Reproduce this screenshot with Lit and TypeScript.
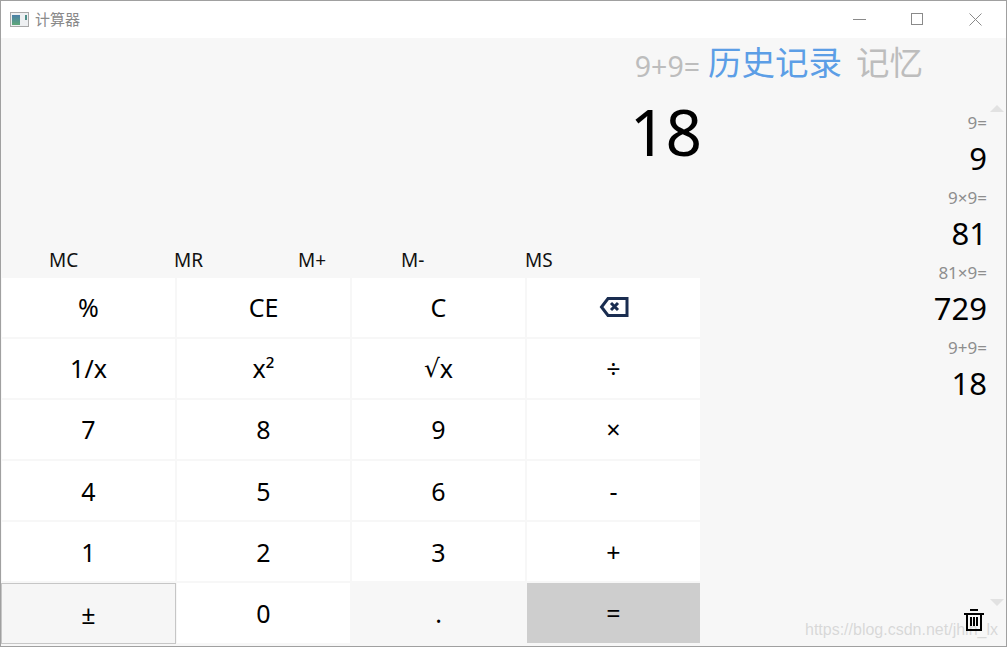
import { LitElement, html, css } from "lit";
import { customElement } from "lit/decorators.js";

const KEYS = ["%","CE","C","<","1/x","x²","√x","÷","7","8","9","×","4","5","6","-","1","2","3","+","±","0",".","="];
const HISTORY = [["9=","9"],["9×9=","81"],["81×9=","729"],["9+9=","18"]];
const MEM = [["MC",125],["MR",124],["M+",103],["M-",124],["MS",100]];

@customElement("app-root")
export class AppRoot extends LitElement {
  static styles = css`
    :host { display: block; width: 1007px; height: 647px; font-family: "Noto Sans", "Noto Sans CJK SC", sans-serif; }
    .win { position: relative; box-sizing: border-box; width: 1007px; height: 647px; border: 1px solid #a0a0a0; background: #f7f7f7; display: flex; flex-direction: column; overflow: hidden; }
    .title { height: 37px; flex: none; background: #fff; display: flex; align-items: center; padding: 0 2px 0 9px; color: #8a8a8a; font-size: 15px; font-family: "Noto Sans CJK SC", sans-serif; }
    .title .app { margin-right: 6px; display: block; }
    .title .name { flex: 1; padding-bottom: 2px; }
    .ctl { width: 58px; height: 37px; display: flex; align-items: center; justify-content: center; }
    .main { flex: 1; display: flex; min-height: 0; }
    .left { width: 699px; flex: none; padding-left: 1px; box-sizing: border-box; display: flex; flex-direction: column; }
    .expr { height: 58px; box-sizing: border-box; text-align: right; font-size: 28.500px; line-height: 56px; color: #bdbdbd; }
    .result { height: 142px; text-align: right; font-size: 64px; line-height: 72px; color: #000; letter-spacing: -1px; margin-right: -1px; }
    .mem { height: 39.500px; display: flex; padding-left: 47px; font-size: 19px; line-height: 45px; color: #111; }
    .grid { display: grid; grid-template-columns: repeat(4, 173px); grid-auto-rows: 59.200px; gap: 2px; }
    .key { background: #fff; display: flex; align-items: center; justify-content: center; font-size: 25px; color: #000; box-sizing: border-box; }
    .key .root { font-family: "DejaVu Sans", sans-serif; font-size: 25px; }
    .key.pm { background: #f6f6f6; border: 1px solid #c6c6c6; margin: 0 -1px -1px; }
    .key.dot { background: #f7f7f7; }
    .key.eq { background: #cecece; }
    .right { flex: 1; position: relative; padding-left: 8px; display: flex; flex-direction: column; }
    .tabs { height: 51px; display: flex; gap: 14px; font-family: "Noto Sans CJK SC", sans-serif; font-size: 33.500px; line-height: 46px; color: #bdbdbd; white-space: nowrap; }
    .tabs .on { color: #5c9ee6; }
    .hist { width: 279px; text-align: right; padding-top: 25px; }
    .item { height: 75px; }
    .q { font-size: 17px; line-height: 18px; color: #8e8e8e; }
    .a { font-size: 31px; line-height: 52px; color: #000; }
    .tri { position: absolute; right: 2px; width: 0; height: 0; border-left: 7px solid transparent; border-right: 7px solid transparent; }
    .tri.up { top: 67px; border-bottom: 7px solid #e2e2e2; }
    .tri.down { bottom: 40px; border-top: 7px solid #e2e2e2; }
    .trash { position: absolute; right: 22px; bottom: 15px; display: block; }
    .mark { position: absolute; right: 8px; bottom: 7px; font-family: "Liberation Sans", sans-serif; font-size: 16px; color: rgba(190,190,190,.55); white-space: nowrap; }
  `;

  private backspace() {
    return html`<svg width="30" height="22" viewBox="0 0 30 22" fill="none" stroke="#1a2d50" stroke-width="3">
      <path d="M28 2.500H9L2.500 11 9 19.500h19z" />
      <path d="M12 7l7 7M19 7l-7 7" />
    </svg>`;
  }

  private label(k: string) {
    if (k === "<") return this.backspace();
    if (k === "√x") return html`<span class="root">√</span>x`;
    return k;
  }

  render() {
    return html`<div class="win">
      <div class="title">
        <svg class="app" width="19" height="15" viewBox="0 0 19 15">
          <defs><linearGradient id="g" x1="0" y1="0" x2="0" y2="1"><stop offset="0" stop-color="#4a7fa8"/><stop offset="1" stop-color="#5fa878"/></linearGradient></defs>
          <rect x=".5" y=".5" width="18" height="14" fill="#eef0f2" stroke="#a9a9a9"/>
          <rect x="2" y="3" width="8" height="10" fill="url(#g)"/>
          <rect x="15" y="3" width="2" height="5" fill="#4f8f8a"/>
        </svg>
        <span class="name">计算器</span>
        <div class="ctl"><svg width="13" height="13"><path d="M0 6.500h13" stroke="#8a8a8a"/></svg></div>
        <div class="ctl"><svg width="13" height="13"><rect x=".5" y=".5" width="11" height="11" fill="none" stroke="#8a8a8a"/></svg></div>
        <div class="ctl"><svg width="13" height="13"><path d="M.5.500l12 12M12.500.500l-12 12" stroke="#8a8a8a" fill="none"/></svg></div>
      </div>
      <div class="main">
        <div class="left">
          <div class="expr">9+9=</div>
          <div class="result">18</div>
          <div class="mem">${MEM.map(([m, w]) => html`<span style="width:${w}px">${m}</span>`)}</div>
          <div class="grid">
            ${KEYS.map((k) => {
              const cls = k === "±" ? "pm" : k === "." ? "dot" : k === "=" ? "eq" : "";
              return html`<div class="key ${cls}">${this.label(k)}</div>`;
            })}
          </div>
        </div>
        <div class="right">
          <div class="tabs"><span class="on">历史记录</span><span>记忆</span></div>
          <div class="hist">
            ${HISTORY.map(([q, a]) => html`<div class="item"><div class="q">${q}</div><div class="a">${a}</div></div>`)}
          </div>
          <div class="tri up"></div>
          <div class="tri down"></div>
          <div class="mark">https://blog.csdn.net/jhlh_lx</div>
          <svg class="trash" width="20" height="22" viewBox="0 0 20 22" fill="none" stroke="#000" stroke-width="2">
            <path d="M6 1h8M0 5h20M3 6v15h14V6M7 8v9M10 8v9M13 8v9"/>
          </svg>
        </div>
      </div>
    </div>`;
  }
}
